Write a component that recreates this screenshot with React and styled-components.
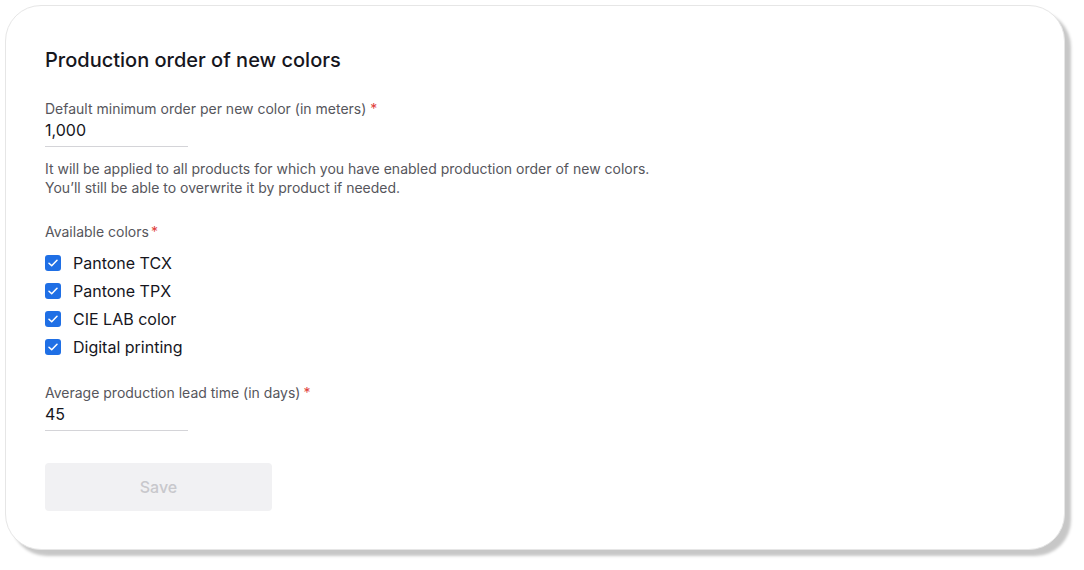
import styled, { createGlobalStyle } from "styled-components"

const GlobalStyle = createGlobalStyle`
    body {
    margin: 0;
    background: #ffffff;
    font-family: Inter, "Noto Sans", sans-serif;}
`
const Page = styled.div`
    padding: 5px;
    width: 1084px;
    height: 570px;
    box-sizing: border-box;
`
const Card = styled.section`
    box-sizing: border-box;
    width: 1060px;
    height: 545px;
    background: #ffffff;
    border: 1px solid #e6e6e6;
    border-radius: 36px;
    box-shadow: 6px 6px 3px rgba(0, 0, 0, 0.22);
    padding: 42px 40px 0 39px;
    display: flex;
    flex-direction: column;
    align-items: flex-start;
`
const Title = styled.h1`
    margin: 0;
    font-size: 20px;
    line-height: 24px;
    font-weight: 450;
    color: #16161d;
`
const Label = styled.div`
    font-size: 14px;
    line-height: 20px;
    color: #56565c;
    margin-top: ${(p) => p.$top}px;
    display: flex;
    gap: ${(p) => p.$gap || 4}px;
`
const Star = styled.span`
    color: #e0403a;
`
const Value = styled.div`
    width: 143px;
    font-size: 16px;
    line-height: 22px;
    color: #16161d;
    padding-bottom: 5px;
    border-bottom: 1px solid #d4d4d8;
`
const Help = styled.p`
    margin: 12px 0 0;
    font-size: 14px;
    line-height: 19px;
    color: #56565c;
`
const List = styled.div`
    display: flex;
    flex-direction: column;
    margin-top: 7px;
`
const Row = styled.label`
    display: flex;
    align-items: center;
    gap: 12px;
    height: 28px;
    font-size: 16px;
    color: #16161d;
`
const Box = styled.span`
    width: 16px;
    height: 16px;
    border-radius: 3px;
    background: #1f6fe5;
    display: flex;
    align-items: center;
    justify-content: center;
`
const SaveButton = styled.button`
    margin-top: 32px;
    width: 227px;
    height: 48px;
    border: none;
    border-radius: 4px;
    background: #f1f1f3;
    color: #c8c8cc;
    font-family: Inter, "Noto Sans", sans-serif;
    font-size: 16px;
    font-weight: 500;
`

const colors = ["Pantone TCX", "Pantone TPX", "CIE LAB color", "Digital printing"]

function Check() {
    return (
        <svg width="10" height="8" viewBox="0 0 10 8" fill="none">
            <path d="M1 4.2L3.7 6.8L9 1.2" stroke="#ffffff" strokeWidth="1.5" strokeLinecap="round" strokeLinejoin="round" />
        </svg>
    )
}

export default function App() {
    return (
        <Page>
            <GlobalStyle />
            <Card>
                <Title>Production order of new colors</Title>
                <Label $top={27}>Default minimum order per new color (in meters)<Star>*</Star></Label>
                <Value>1,000</Value>
                <Help>
                    It will be applied to all products for which you have enabled production order of new colors.
                    <br />
                    You’ll still be able to overwrite it by product if needed.
                </Help>
                <Label $top={25} $gap={2}>Available colors<Star>*</Star></Label>
                <List>
                    {colors.map((c) => (
                        <Row key={c}>
                            <Box><Check /></Box>
                            {c}
                        </Row>
                    ))}
                </List>
                <Label $top={22} $gap={3}>Average production lead time (in days)<Star>*</Star></Label>
                <Value>45</Value>
                <SaveButton disabled>Save</SaveButton>
            </Card>
        </Page>
    )
}
